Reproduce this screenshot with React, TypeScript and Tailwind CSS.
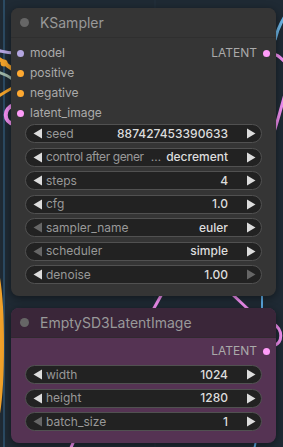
import type { ReactNode } from 'react';

type Widget = {
  label: string;
  value: string;
  leftDim?: boolean;
  rightDim?: boolean;
  ellipsis?: boolean;
};

const samplerWidgets: Widget[] = [
  { label: 'seed', value: '887427453390633' },
  { label: 'control after gener', value: 'decrement', ellipsis: true },
  { label: 'steps', value: '4' },
  { label: 'cfg', value: '1.0' },
  { label: 'sampler_name', value: 'euler', leftDim: true },
  { label: 'scheduler', value: 'simple', leftDim: true },
  { label: 'denoise', value: '1.00', rightDim: true },
];

const latentWidgets: Widget[] = [
  { label: 'width', value: '1024' },
  { label: 'height', value: '1280' },
  { label: 'batch_size', value: '1', leftDim: true },
];

const inputs = [
  { name: 'model', color: 'bg-[#b4a6e0]' },
  { name: 'positive', color: 'bg-[#ffa931]' },
  { name: 'negative', color: 'bg-[#ffa931]' },
  { name: 'latent_image', color: 'bg-[#ff9cf9]' },
];

const Arrow = ({ dir, dim }: { dir: 'left' | 'right'; dim?: boolean }) => (
  <svg width="10" height="11" viewBox="0 0 10 11" className="shrink-0">
    <polygon
      points={dir === 'left' ? '9,0.5 9,10.5 0.5,5.5' : '1,0.5 1,10.5 9.5,5.5'}
      fill={dim ? '#666666' : '#dddddd'}
    />
  </svg>
);

const WidgetRow = ({ w }: { w: Widget }) => (
  <div className="h-[19px] flex items-center rounded-full border border-[#515151] bg-[#222222] pl-[7px] pr-[5px] text-[12px] leading-none">
    <Arrow dir="left" dim={w.leftDim} />
    <span className={`ml-[3px] text-[#999999] whitespace-nowrap ${w.ellipsis ? 'tracking-[-0.4px]' : ''}`}>
      {w.label}
    </span>
    <span className="flex-1" />
    {w.ellipsis && <span className="text-[#999999] ml-[6px] mr-[5px]">…</span>}
    <span className="text-[#dddddd] font-medium whitespace-nowrap">{w.value}</span>
    <span className="w-[18px] shrink-0" />
    <Arrow dir="right" dim={w.rightDim} />
  </div>
);

const Node = ({
  title,
  titleBg,
  bodyBg,
  children,
}: {
  title: string;
  titleBg: string;
  bodyBg: string;
  children: ReactNode;
}) => (
  <div className={`w-[265px] rounded-lg overflow-hidden shadow-[0_2px_8px_rgba(0,0,0,0.45)] ${bodyBg}`}>
    <div className={`h-[30px] flex items-center pl-[9px] gap-[11px] border-b border-[#2c2c2c]/60 ${titleBg}`}>
      <div className="w-[9px] h-[9px] rounded-full bg-[#666666]" />
      <span className="text-[14px] text-[#999999]">{title}</span>
    </div>
    {children}
  </div>
);

const Wires = () => (
  <svg className="absolute inset-0" width="283" height="447" viewBox="0 0 283 447" fill="none">
    <line x1="155" y1="0" x2="155" y2="447" stroke="#25313c" strokeWidth="1" />
    <line x1="4" y1="0" x2="4" y2="447" stroke="#2b4a62" strokeWidth="2" />
    {/* left side of KSampler */}
    <path d="M -4 50 C 2 51, 6 53, 14 53" stroke="#b4a6e0" strokeWidth="3" />
    <path d="M -3 58 Q 4 61, 8 66 L 14 70" stroke="#f0a12a" strokeWidth="4" />
    <circle cx="4" cy="63" r="3.5" fill="#f0a12a" />
    <path d="M -3 72 Q 6 74, 14 80" stroke="#9db4a6" strokeWidth="3" />
    <path d="M -3 97 Q 5 92, 14 87" stroke="#f0a12a" strokeWidth="3" />
    <path d="M 14 105 C 3 108, 3 122, 14 124" stroke="#f08ef0" strokeWidth="4" />
    {/* right side of KSampler */}
    <path d="M 285 16 C 280 24, 277 30, 275 40" stroke="#6cb4e4" strokeWidth="3" />
    <path d="M 268 53 C 276 53, 280 57, 285 62" stroke="#f08ef0" strokeWidth="3" />
    <path d="M 285 94 C 281 108, 278 120, 274 132" stroke="#f08ef0" strokeWidth="3" />
    {/* between nodes */}
    <path d="M 163 292 L 153 310" stroke="#f08ef0" strokeWidth="3" />
    <path d="M 232 294 L 249 310" stroke="#f08ef0" strokeWidth="3" />
    <path d="M 262 292 L 262 310" stroke="#5aa8e0" strokeWidth="2" />
    {/* left of latent node */}
    <path d="M -4 268 C 4 300, 4 390, -4 424" stroke="#f0a12a" strokeWidth="4" />
    {/* right of latent node */}
    <path d="M 274 324 C 283 330, 283 342, 274 346" stroke="#f08ef0" strokeWidth="3" />
    {/* below latent node */}
    <path d="M 76 436 L 70 450" stroke="#f08ef0" strokeWidth="3" />
    <path d="M 257 436 L 254 450" stroke="#5aa8e0" strokeWidth="2" />
  </svg>
);

export default function App() {
  return (
    <div
      className="relative w-[283px] h-[447px] overflow-hidden bg-[#1f2a34]"
      style={{ fontFamily: 'Inter, "Noto Sans", sans-serif' }}
    >
      <Wires />
      <div className="relative flex flex-col pt-2 pl-[11px]">
        <Node title="KSampler" titleBg="bg-[#353535]" bodyBg="bg-[#353535]">
          <div className="relative pt-[5px]">
            {inputs.map((inp, i) => (
              <div key={inp.name} className="h-5 flex items-center pl-[6px] gap-[6px] text-[12px] text-[#aaaaaa]">
                <div className={`w-[7px] h-[7px] rounded-full ${inp.color}`} />
                <span className="flex-1">{inp.name}</span>
                {i === 0 && (
                  <div className="flex items-center gap-[6px] pr-[6px]">
                    <span>LATENT</span>
                    <div className="w-[7px] h-[7px] rounded-full bg-[#ff9cf9]" />
                  </div>
                )}
              </div>
            ))}
          </div>
          <div className="flex flex-col gap-[4.5px] px-[14px] pt-[1px] pb-[12px]">
            {samplerWidgets.map((w) => (
              <WidgetRow key={w.label} w={w} />
            ))}
          </div>
        </Node>

        <div className="h-3" />

        <Node title="EmptySD3LatentImage" titleBg="bg-[#3a2639]" bodyBg="bg-[#553353]">
          <div className="h-5 mt-[3px] flex items-center justify-end gap-[6px] pr-[6px] text-[12px] text-[#aaaaaa]">
            <span>LATENT</span>
            <div className="w-[7px] h-[7px] rounded-full bg-[#ff9cf9]" />
          </div>
          <div className="flex flex-col gap-[4.5px] px-[14px] pt-[4px] pb-[12px]">
            {latentWidgets.map((w) => (
              <WidgetRow key={w.label} w={w} />
            ))}
          </div>
        </Node>
      </div>
    </div>
  );
}
